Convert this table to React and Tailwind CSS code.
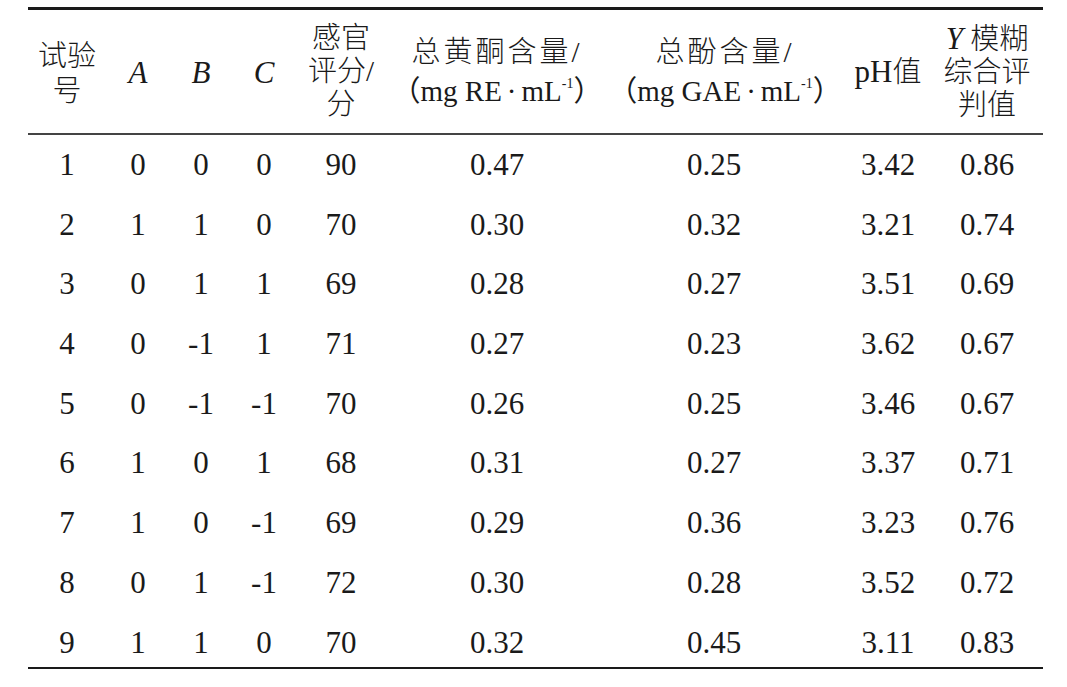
import React from "react";

const rows = [
  ["1", "0", "0", "0", "90", "0.47", "0.25", "3.42", "0.86"],
  ["2", "1", "1", "0", "70", "0.30", "0.32", "3.21", "0.74"],
  ["3", "0", "1", "1", "69", "0.28", "0.27", "3.51", "0.69"],
  ["4", "0", "-1", "1", "71", "0.27", "0.23", "3.62", "0.67"],
  ["5", "0", "-1", "-1", "70", "0.26", "0.25", "3.46", "0.67"],
  ["6", "1", "0", "1", "68", "0.31", "0.27", "3.37", "0.71"],
  ["7", "1", "0", "-1", "69", "0.29", "0.36", "3.23", "0.76"],
  ["8", "0", "1", "-1", "72", "0.30", "0.28", "3.52", "0.72"],
  ["9", "1", "1", "0", "70", "0.32", "0.45", "3.11", "0.83"],
];

const cols =
  "grid grid-cols-[78px_64px_62px_64px_90px_222px_212px_136px_62px_25px]";

function H({ children, className = "" }) {
  return (
    <div className={"flex flex-col items-center justify-center whitespace-nowrap " + className}>
      {children}
    </div>
  );
}

export default function App() {
  return (
    <div
      className="w-[1067px] h-[687px] bg-white text-[#1a1a1a] pt-[7px]"
      style={{ fontFamily: '"Liberation Serif", "Noto Sans CJK SC", serif' }}
    >
      <div className="ml-[28px] w-[1015px] border-t-[3px] border-b-[2.5px] border-[#1a1a1a]">
        {/* header */}
        <div className={cols + " h-[125px] border-b-[2px] border-[#444] text-[29px] font-light"}>
          <H className="leading-[35px] pt-[4px]">
            <span>试验</span>
            <span>号</span>
          </H>
          <H className="text-[31px] italic pt-[3px]">A</H>
          <H className="text-[31px] italic pt-[3px]">B</H>
          <H className="text-[31px] italic pt-[3px]">C</H>
          <H className="leading-[33px]">
            <span>感官</span>
            <span>评分/</span>
            <span>分</span>
          </H>
          <H className="leading-[39px]">
            <span className="tracking-[3px]">总黄酮含量/</span>
            <span className="font-normal">
              （mg RE<span className="mx-[5px]">·</span>mL
              <sup className="text-[14px] relative top-[-13px]">-1</sup>）
            </span>
          </H>
          <H className="leading-[39px] pl-[22px]">
            <span className="tracking-[3px]">总酚含量/</span>
            <span className="font-normal">
              （mg GAE<span className="mx-[5px]">·</span>mL
              <sup className="text-[14px] relative top-[-13px]">-1</sup>）
            </span>
          </H>
          <H className="pt-[2px]">
            <span>
              <span className="font-normal text-[31px]">pH</span>值
            </span>
          </H>
          <H className="leading-[33px]">
            <span>
              <span className="italic font-normal text-[31px]">Y</span> 模糊
            </span>
            <span>综合评</span>
            <span>判值</span>
          </H>
          <div />
        </div>
        {/* body */}
        <div className="text-[31px]">
          {rows.map((r, i) => (
            <div
              key={i}
              className={cols + (i === rows.length - 1 ? " h-[54px]" : " h-[59.7px]")}
            >
              {r.map((c, j) => (
                <div key={j} className="flex justify-center leading-[59.7px] whitespace-nowrap">
                  {c}
                </div>
              ))}
              <div />
            </div>
          ))}
        </div>
      </div>
    </div>
  );
}
